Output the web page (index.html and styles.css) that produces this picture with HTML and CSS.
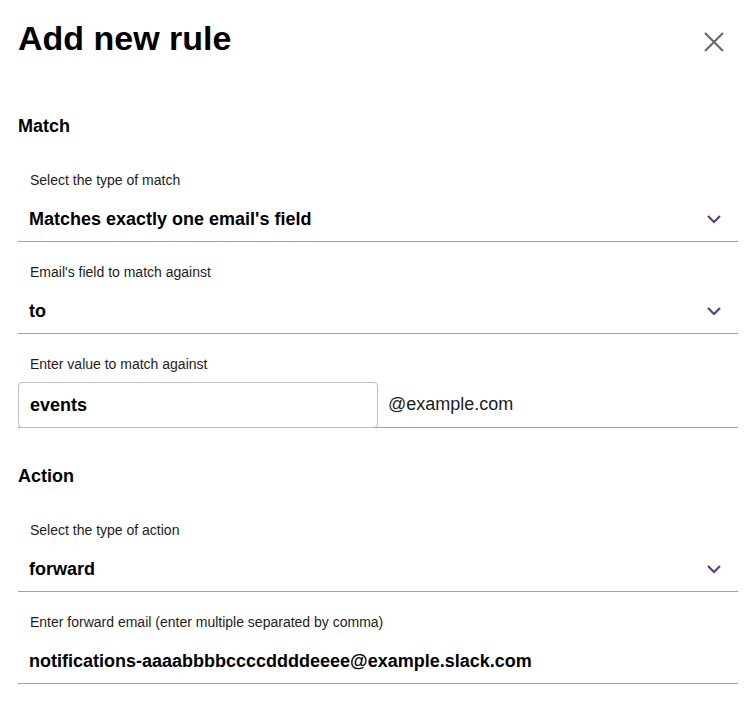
FILE: index.html
```html
<!DOCTYPE html>
<html lang="en">
<head>
<meta charset="utf-8">
<title>Add new rule</title>
<link rel="stylesheet" href="styles.css">
</head>
<body>
<div class="modal">
  <header class="header">
    <h1 class="title">Add new rule</h1>
    <button class="close" aria-label="Close">
      <svg width="22" height="22" viewBox="0 0 22 22"><path d="M2 2 L20 20 M20 2 L2 20" stroke="#666" stroke-width="2" fill="none"/></svg>
    </button>
  </header>

  <section class="section">
    <h2 class="section-title">Match</h2>
    <div class="field">
      <div class="label">Select the type of match</div>
      <div class="select">
        <span class="value">Matches exactly one email's field</span>
        <svg class="chev" width="16" height="10" viewBox="0 0 16 10"><path d="M2 2 L8 8 L14 2" stroke="#5b3c8c" stroke-width="2.2" fill="none"/></svg>
      </div>
    </div>
    <div class="field">
      <div class="label">Email's field to match against</div>
      <div class="select">
        <span class="value">to</span>
        <svg class="chev" width="16" height="10" viewBox="0 0 16 10"><path d="M2 2 L8 8 L14 2" stroke="#5b3c8c" stroke-width="2.2" fill="none"/></svg>
      </div>
    </div>
    <div class="field">
      <div class="label">Enter value to match against</div>
      <div class="input-row">
        <div class="input"><span class="value">events</span></div>
        <div class="suffix">@example.com</div>
      </div>
    </div>
  </section>

  <section class="section action">
    <h2 class="section-title">Action</h2>
    <div class="field">
      <div class="label">Select the type of action</div>
      <div class="select">
        <span class="value">forward</span>
        <svg class="chev" width="16" height="10" viewBox="0 0 16 10"><path d="M2 2 L8 8 L14 2" stroke="#5b3c8c" stroke-width="2.2" fill="none"/></svg>
      </div>
    </div>
    <div class="field">
      <div class="label">Enter forward email (enter multiple separated by comma)</div>
      <div class="select">
        <span class="value">notifications-aaaabbbbccccddddeeee@example.slack.com</span>
      </div>
    </div>
  </section>
</div>
</body>
</html>
```
FILE: styles.css
```css
html, body {
  margin: 0;
  padding: 0;
  background: #fff;
}
body {
  font-family: "Liberation Sans", Arial, sans-serif;
  color: #000;
}
.modal {
  padding: 20px 12px 0 18px;
}
.header {
  display: flex;
  justify-content: space-between;
  align-items: flex-start;
}
.title {
  margin: 0;
  font-size: 34px;
  line-height: 37px;
  font-weight: bold;
}
.close {
  border: 0;
  background: none;
  padding: 0;
  margin: 11px 13px 0 0;
  width: 22px;
  height: 22px;
  display: block;
}
.close svg { display: block; }
.section {
  margin-top: 57px;
}
.section.action {
  margin-top: 36px;
}
.section-title {
  margin: 0;
  font-size: 18px;
  line-height: 24px;
  font-weight: bold;
}
.field {
  padding-top: 22px;
}
.section-title + .field {
  padding-top: 34px;
}
.label {
  font-size: 14px;
  line-height: 16px;
  padding-left: 12px;
  color: #1d1c1d;
}
.select {
  display: flex;
  align-items: center;
  justify-content: space-between;
  padding: 19px 16px 10px 11px;
  border-bottom: 1px solid #a3a3a3;
}
.value {
  font-size: 18px;
  line-height: 24px;
  font-weight: bold;
}
.chev { display: block; }
.input-row {
  display: flex;
  margin-top: 10px;
  border-bottom: 1px solid #a3a3a3;
}
.input {
  height: 44px;
  border: 1px solid #bdbdbd;
  border-radius: 4px;
  margin-bottom: -1px;
  display: flex;
  align-items: center;
  padding-left: 11px;
  box-sizing: content-box;
  width: 347px;
}
.suffix {
  display: flex;
  align-items: center;
  padding-left: 10px;
  font-size: 18px;
  color: #1d1c1d;
}
```
